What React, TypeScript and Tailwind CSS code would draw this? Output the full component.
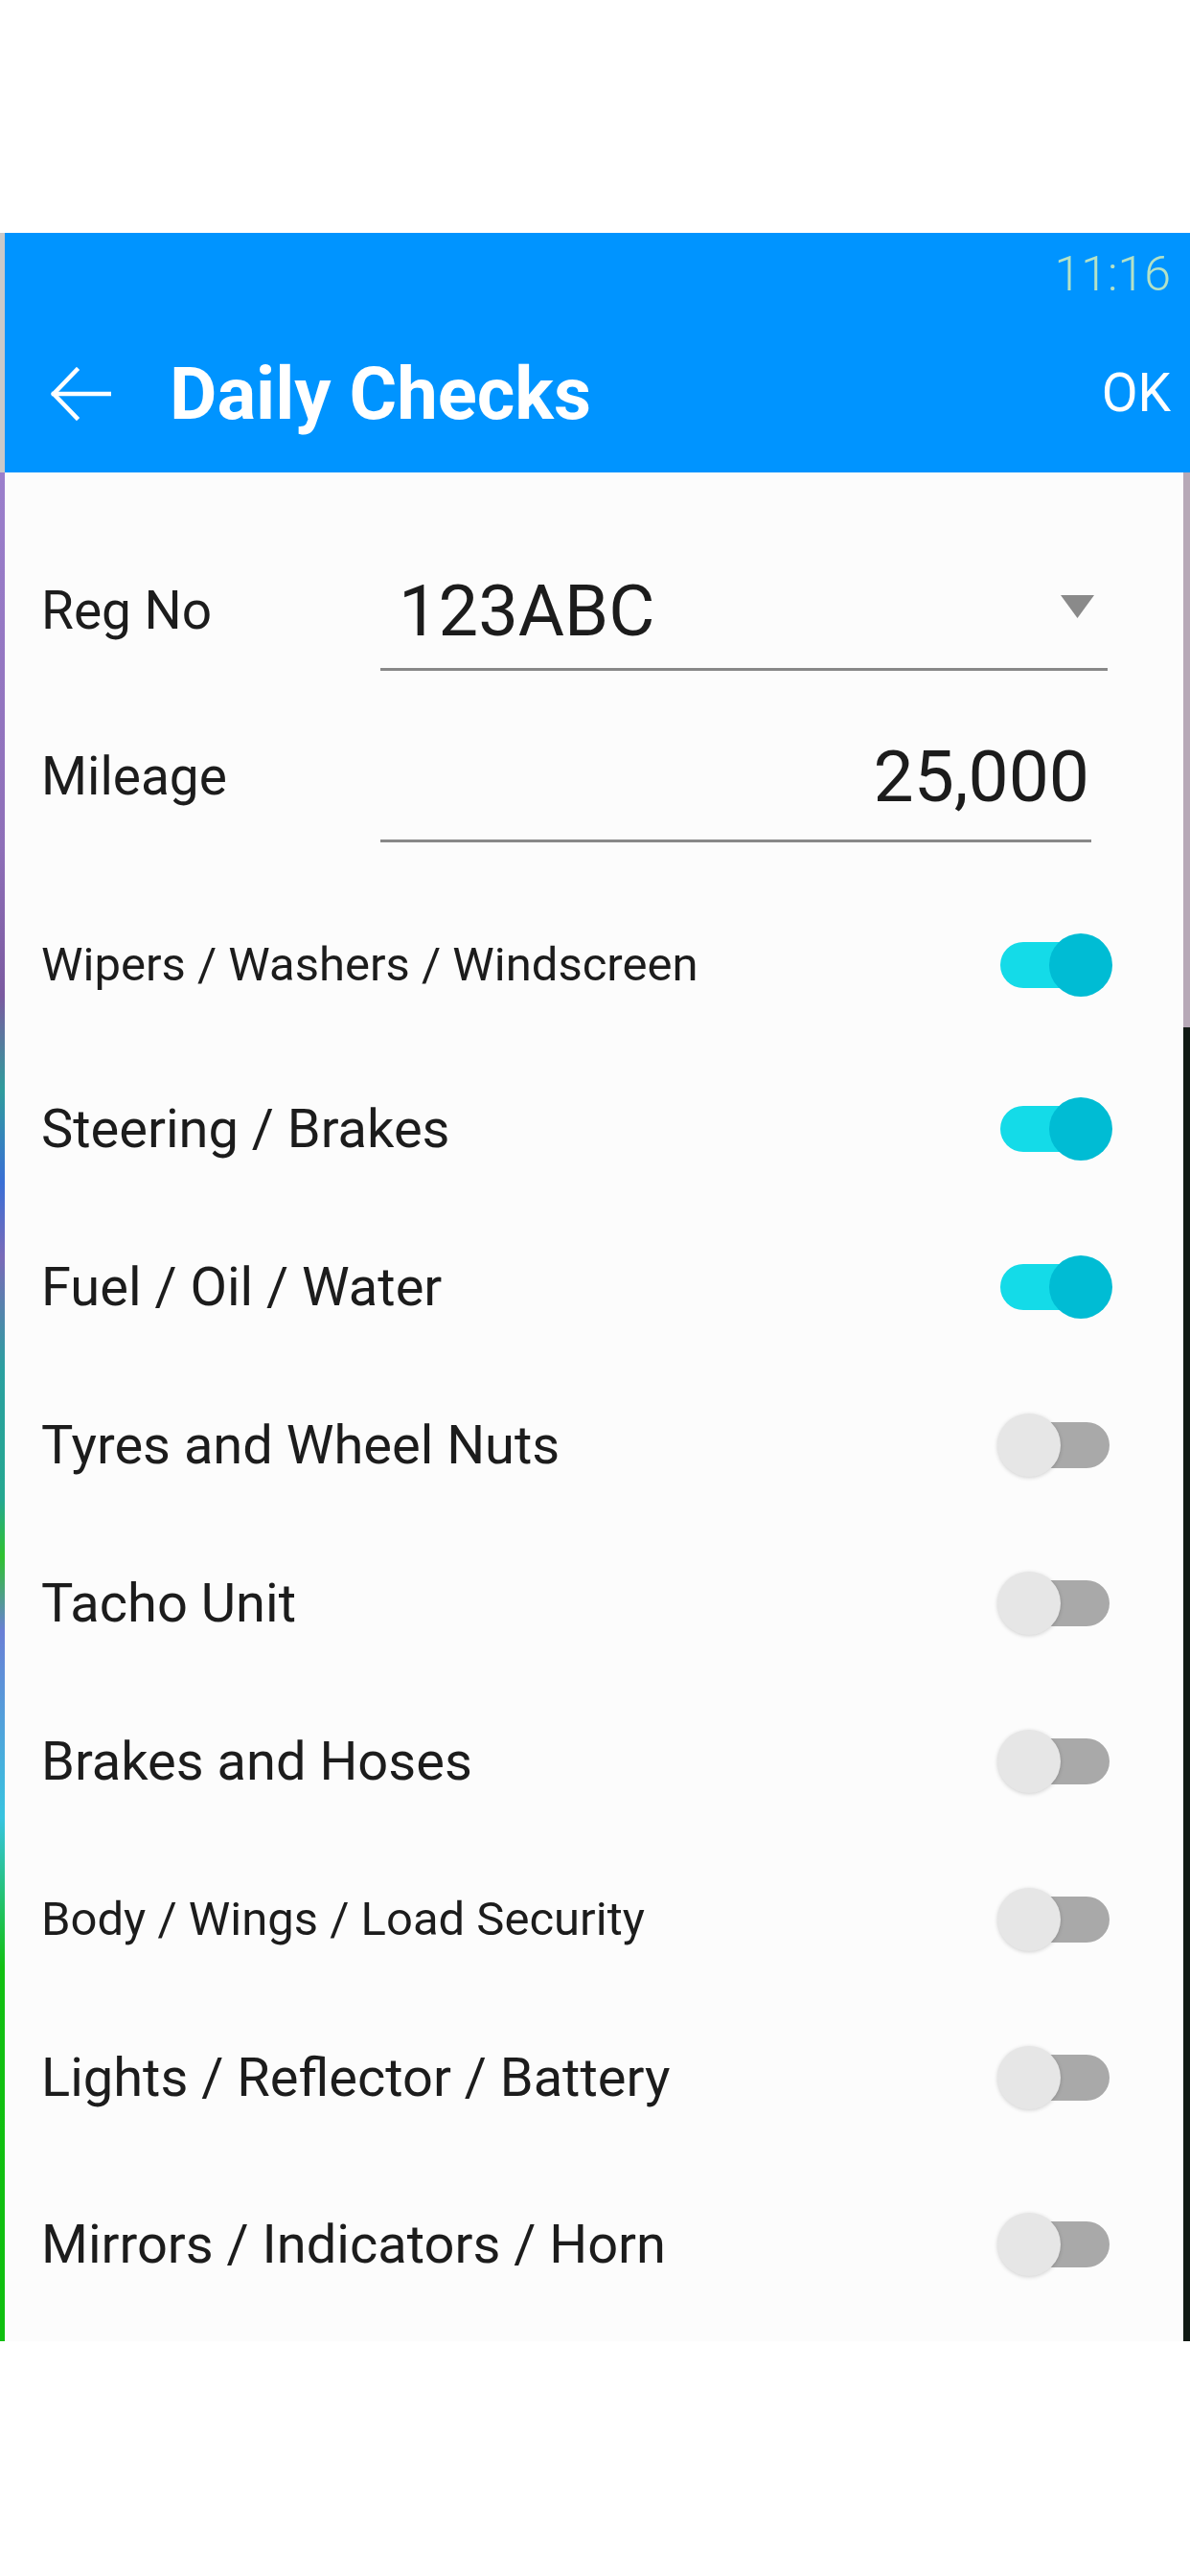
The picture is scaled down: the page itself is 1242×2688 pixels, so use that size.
import React from "react";

type Check = { label: string; on: boolean; small?: boolean; gap?: string };

const checks: Check[] = [
  { label: "Wipers / Washers / Windscreen", on: true, small: true },
  { label: "Steering / Brakes", on: true, gap: "mt-[6px]" },
  { label: "Fuel / Oil / Water", on: true },
  { label: "Tyres and Wheel Nuts", on: false },
  { label: "Tacho Unit", on: false },
  { label: "Brakes and Hoses", on: false },
  { label: "Body / Wings / Load Security", on: false, small: true },
  { label: "Lights / Reflector / Battery", on: false },
  { label: "Mirrors / Indicators / Horn", on: false, gap: "mt-[9px]" },
];

const font = { fontFamily: "Roboto, 'Noto Sans', sans-serif" };

function Toggle({ on }: { on: boolean }) {
  return (
    <div className="relative w-[120px] h-[66px] flex items-center">
      <div
        className={
          on
            ? "absolute left-[3px] right-[3px] h-[48px] rounded-full bg-[#14dbe8]"
            : "absolute left-[3px] right-[3px] h-[48px] rounded-full bg-[#a9a9a9]"
        }
      />
      <div
        className={
          on
            ? "absolute right-0 w-[66px] h-[66px] rounded-full bg-[#00bcd4]"
            : "absolute left-0 w-[66px] h-[66px] rounded-full bg-[#e6e6e6] shadow-[0_1px_4px_rgba(0,0,0,0.18)]"
        }
      />
    </div>
  );
}

export default function App() {
  return (
    <div className="w-[1242px] min-h-[2688px] bg-white" style={font}>
      <div className="h-[243px]" />
      <div className="flex h-[2200px]">
        {/* left edge strip */}
        <div className="w-[5px] flex flex-col">
          <div className="h-[250px] bg-[#c9c9c9]" />
          <div className="flex-1 bg-[linear-gradient(to_bottom,#9b7fcc_0%,#8e6fb8_20%,#7b5aa0_28%,#2f9c9c_33%,#3a6fd6_38%,#7a6ab8_42%,#2aa0a0_48%,#25a890_55%,#2fc22f_58%,#6a7fd6_62%,#38c4e0_72%,#12c012_80%,#0fbf0f_100%)]" />
        </div>

        <div className="flex-1 flex flex-col">
          {/* header */}
          <div className="h-[250px] bg-[#0094ff] flex flex-col">
            <div className="h-[85px] flex items-center justify-end pr-[20px]">
              <span className="text-[50px] font-light leading-none text-[#b4e2c6]">11:16</span>
            </div>
            <div className="flex-1 flex items-center pl-[47px] pr-[20px]">
              <svg width="64" height="56" viewBox="0 0 64 56" fill="none" stroke="white" strokeWidth="4.5" strokeLinecap="square">
                <path d="M62 28H4" />
                <path d="M28 3L4 28l24 25" />
              </svg>
              <span className="ml-[61px] text-[76px] font-bold leading-none text-white">Daily Checks</span>
              <span className="ml-auto text-[55px] leading-none text-white">OK</span>
            </div>
          </div>

          <div className="flex-1 flex">
            {/* body */}
            <div className="flex-1 bg-[#fcfcfc] pt-[85px] text-[#1c1c1c]">
              <div className="flex h-[122px]">
                <div className="w-[392px] pl-[38px] flex items-center pb-[3px] text-[55px] leading-none">Reg No</div>
                <div className="w-[759px] flex items-center border-b-[3px] border-[#888888] pl-[19px] pr-[14px]">
                  <span className="text-[74px] leading-none">123ABC</span>
                  <svg className="ml-auto mb-[10px]" width="35" height="24" viewBox="0 0 35 24">
                    <path d="M0 0h35L17.5 24z" fill="#8a8a8a" />
                  </svg>
                </div>
              </div>

              <div className="flex h-[134px] mt-[45px]">
                <div className="w-[392px] pl-[38px] flex items-center pb-[3px] text-[55px] leading-none">Mileage</div>
                <div className="w-[742px] flex items-center justify-end border-b-[3px] border-[#888888] pr-[2px]">
                  <span className="text-[75px] leading-none">25,000</span>
                </div>
              </div>

              <div className="mt-[45px] flex flex-col">
                {checks.map((c) => (
                  <div key={c.label} className={"h-[165px] flex items-center pl-[38px] pr-[74px] " + (c.gap ?? "")}>
                    <span className={c.small ? "text-[49px] leading-none" : "text-[56px] leading-none"}>{c.label}</span>
                    <div className="ml-auto">
                      <Toggle on={c.on} />
                    </div>
                  </div>
                ))}
              </div>
            </div>
            {/* right scroll strip */}
            <div className="w-[7px] flex flex-col">
              <div className="h-[579px] bg-[#b7a9b7]" />
              <div className="flex-1 bg-[#111a14]" />
            </div>
          </div>
        </div>
      </div>
    </div>
  );
}
